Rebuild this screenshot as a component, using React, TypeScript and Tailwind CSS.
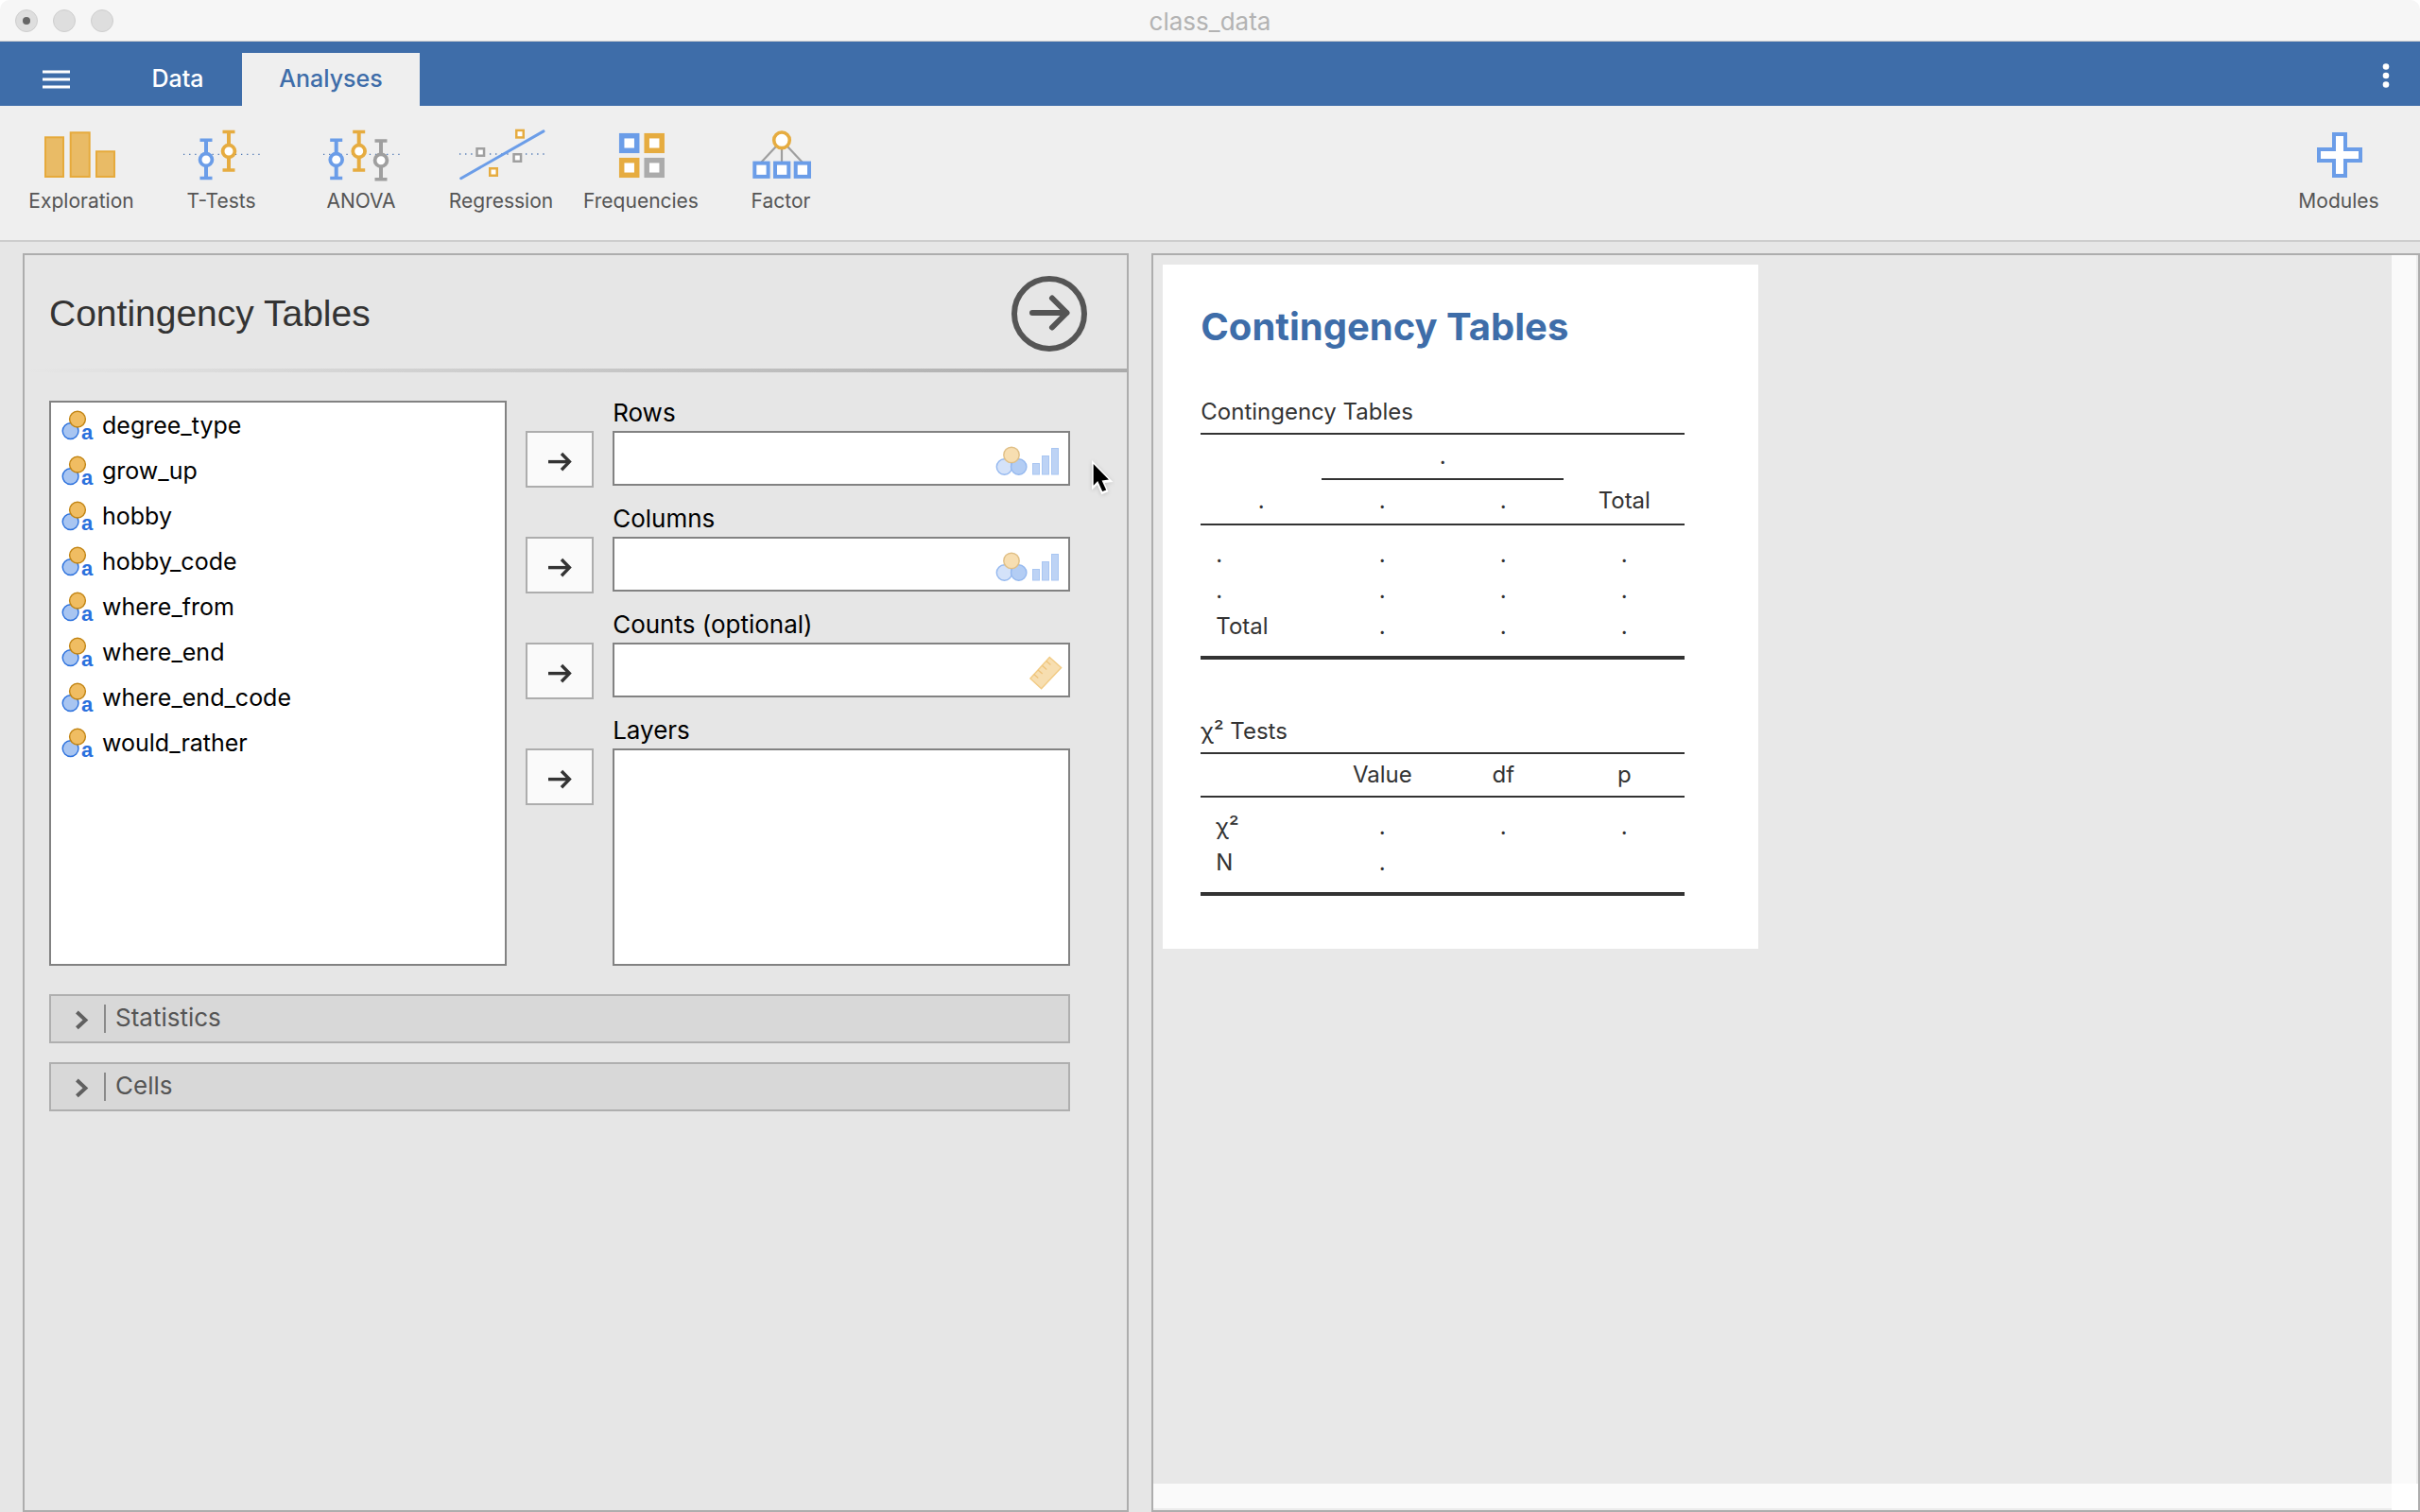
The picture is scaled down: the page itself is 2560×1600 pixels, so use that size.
import React, { useState } from "react";
import type { ReactNode } from "react";

const BLUE = "#6b9de8";
const GOLD = "#e6ac40";
const GREY = "#9f9f9f";

/* ---------- toolbar icons ---------- */

function IconFrame({ children }: { children: ReactNode }) {
  return (
    <svg className="h-16 w-24" viewBox="0 0 96 64" fill="none" aria-hidden="true">
      {children}
    </svg>
  );
}

function Dots({ x1, x2, y }: { x1: number; x2: number; y: number }) {
  return <path d={`M${x1} ${y}H${x2}`} stroke="#4f78b4" strokeWidth="1.3" strokeDasharray="1.3 4.8" />;
}

function ErrorBar({ x, top, mid, bottom, color }: { x: number; top: number; mid: number; bottom: number; color: string }) {
  return (
    <g stroke={color}>
      <path d={`M${x} ${top}V${bottom}`} strokeWidth="4" />
      <path d={`M${x - 6.5} ${top}h13M${x - 6.5} ${bottom}h13`} strokeWidth="3.4" />
      <circle cx={x} cy={mid} r="6.4" fill="#fff" strokeWidth="3.8" />
    </g>
  );
}

function Point({ x, y, color }: { x: number; y: number; color: string }) {
  return <rect x={x - 3.75} y={y - 3.75} width="7.5" height="7.5" fill="#fff" stroke={color} strokeWidth="2.5" />;
}

function ExplorationIcon() {
  return (
    <IconFrame>
      <g fill="#e9bb66" stroke="#e6aa3c" strokeWidth="2">
        <rect x="10" y="15.3" width="19" height="41.7" />
        <rect x="36.7" y="10.3" width="20" height="46.7" />
        <rect x="64" y="30.3" width="19" height="26.7" />
      </g>
    </IconFrame>
  );
}

function TTestsIcon() {
  return (
    <IconFrame>
      <Dots x1={8} x2={93} y={33.4} />
      <ErrorBar x={32} top={18.3} mid={39} bottom={58.5} color={BLUE} />
      <ErrorBar x={56} top={9.5} mid={30} bottom={50} color={GOLD} />
    </IconFrame>
  );
}

function AnovaIcon() {
  return (
    <IconFrame>
      <Dots x1={8} x2={93} y={33.4} />
      <ErrorBar x={21.7} top={18.3} mid={39} bottom={58.5} color={BLUE} />
      <ErrorBar x={45.7} top={9.5} mid={30} bottom={50} color={GOLD} />
      <ErrorBar x={69} top={19} mid={39.7} bottom={59.7} color={GREY} />
    </IconFrame>
  );
}

function RegressionIcon() {
  return (
    <IconFrame>
      <g>
        <Dots x1={4} x2={20} y={33} />
        <Dots x1={36} x2={56} y={33} />
        <Dots x1={74} x2={95} y={33} />
      </g>
      <path d="M5.7 58.7L93 8.9" stroke={BLUE} strokeWidth="3" strokeLinecap="round" />
      <Point x={68} y={11.7} color={GOLD} />
      <Point x={26.3} y={31} color={GREY} />
      <Point x={65.3} y={37} color={GREY} />
      <Point x={40} y={52} color={GOLD} />
    </IconFrame>
  );
}

function FrequenciesIcon() {
  return (
    <IconFrame>
      <g fill="#fff" strokeWidth="5.5">
        <rect x="27.7" y="13.7" width="16" height="15.6" stroke={BLUE} />
        <rect x="54.2" y="13.7" width="16" height="15.6" stroke={GOLD} />
        <rect x="27.7" y="39.7" width="16" height="15.6" stroke={GOLD} />
        <rect x="54.2" y="39.7" width="16" height="15.6" stroke="#ababab" />
      </g>
    </IconFrame>
  );
}

function FactorIcon() {
  return (
    <IconFrame>
      <path d="M43 25L27 42M49 26V42M55 25L71 42" stroke={GREY} strokeWidth="2.2" />
      <circle cx="49" cy="18.3" r="8.3" fill="#fff" stroke={GOLD} strokeWidth="3.6" />
      <g fill="#fff" stroke={BLUE} strokeWidth="4">
        <rect x="20.3" y="42.6" width="14.3" height="14.3" />
        <rect x="42" y="42.6" width="14.3" height="14.3" />
        <rect x="63.7" y="42.6" width="14.3" height="14.3" />
      </g>
    </IconFrame>
  );
}

function ModulesIcon() {
  return (
    <IconFrame>
      <path d="M43 12h12v16h16v12H55v16H43V40H27V28h16z" fill="#fff" stroke={BLUE} strokeWidth="4" />
    </IconFrame>
  );
}

/* ---------- option panel icons ---------- */

function NominalTextIcon() {
  return (
    <svg className="h-10 w-9" viewBox="0 -2 36 40" aria-hidden="true">
      <circle cx="10.6" cy="24.1" r="8.4" fill="#a8c5f1" stroke="#2a70dd" strokeWidth="1.4" />
      <circle cx="18" cy="11.6" r="8.4" fill="#f0bd62" stroke="#c28413" strokeWidth="1.4" />
      <text x="22" y="32.6" fontFamily='"Liberation Sans", sans-serif' fontWeight="700" fontSize="22" fill="#2a70dd">
        a
      </text>
    </svg>
  );
}

function CategoricalHint() {
  return (
    <svg className="mr-1.5 h-[54px] w-[72px] shrink-0" viewBox="0 0 72 54" aria-hidden="true">
      <g strokeWidth="1.4">
        <circle cx="10.5" cy="36" r="8.2" fill="#d4e2f9" stroke="#94b8ef" />
        <circle cx="25.7" cy="36" r="8.2" fill="#b3cdf4" stroke="#94b8ef" />
        <circle cx="18" cy="23.4" r="8.2" fill="#f7deb1" stroke="#e0bf86" />
      </g>
      <g fill="#bdd3f5" stroke="#a9c6f2">
        <rect x="40.5" y="32.5" width="7" height="11.5" />
        <rect x="50.5" y="24.5" width="7" height="19.5" />
        <rect x="60.5" y="16.5" width="7" height="27.5" />
      </g>
    </svg>
  );
}

function ContinuousHint() {
  return (
    <svg className="mr-1.5 h-[54px] w-[72px] shrink-0" viewBox="0 0 72 54" fill="none" aria-hidden="true">
      <path d="M58.3 13.6L70.6 24.6L49.6 46.8L37.9 36Z" fill="#f7deb0" stroke="#f2cb84" strokeWidth="1.4" />
      <path
        d="M41.7 31.6l4.6 4M46 26.9l4.8 4.2M50.4 22.2l4.8 4.2M54.8 17.5l4.6 4.1"
        stroke="#eec27a"
        strokeWidth="1.3"
      />
    </svg>
  );
}

function TransferButton({ label }: { label: string }) {
  return (
    <button
      type="button"
      aria-label={`Move to ${label}`}
      className="flex h-[60px] w-[72px] items-center justify-center border-2 border-[#adadad] bg-[#fafafa]"
    >
      <svg className="size-7" viewBox="0 0 28 28" fill="none" stroke="#333" aria-hidden="true">
        <path d="M2 16.6H24" strokeWidth="3.4" />
        <path d="M16 8L24.4 16.6L16 25.2" strokeWidth="3.4" />
      </svg>
    </button>
  );
}

function PointerCursor() {
  return (
    <svg
      className="pointer-events-none absolute top-[217px] right-[9px] h-10 w-7 drop-shadow-sm"
      viewBox="0 0 28 40"
      aria-hidden="true"
    >
      <path d="M0 0V31.6L5.8 26L10.4 36.2L17.4 33.2L13.6 24L22.4 23Z" fill="#fff" />
      <path d="M1.7 4V26.8L6.2 22L11.2 33L15.2 31.4L10.6 21.6L17.9 20.4Z" fill="#000" />
    </svg>
  );
}

/* ---------- data ---------- */

const TOOLS = [
  { label: "Exploration", Icon: ExplorationIcon },
  { label: "T-Tests", Icon: TTestsIcon },
  { label: "ANOVA", Icon: AnovaIcon },
  { label: "Regression", Icon: RegressionIcon },
  { label: "Frequencies", Icon: FrequenciesIcon },
  { label: "Factor", Icon: FactorIcon },
];

const VARIABLES = [
  "degree_type",
  "grow_up",
  "hobby",
  "hobby_code",
  "where_from",
  "where_end",
  "where_end_code",
  "would_rather",
];

const TARGETS = [
  { id: "rows", label: "Rows", hint: <CategoricalHint /> },
  { id: "columns", label: "Columns", hint: <CategoricalHint /> },
  { id: "counts", label: "Counts (optional)", hint: <ContinuousHint /> },
  { id: "layers", label: "Layers", hint: null },
];

/* ---------- page parts ---------- */

function TitleBar() {
  return (
    <div className="grid h-11 shrink-0 grid-cols-3 items-center rounded-t-[10px] border-b border-[#d2d2d2] bg-[#f6f6f6] px-4">
      <div className="flex gap-4">
        <button
          type="button"
          aria-label="Close"
          className="flex size-6 items-center justify-center rounded-full border border-[#cecece] bg-[#dedede]"
        >
          <span className="size-2 rounded-full bg-[#666]" />
        </button>
        <button type="button" aria-label="Minimise" className="size-6 rounded-full border border-[#cecece] bg-[#dedede]" />
        <button type="button" aria-label="Zoom" className="size-6 rounded-full border border-[#cecece] bg-[#dedede]" />
      </div>
      <h1 className="pt-0.5 text-center text-[26px] leading-8 text-[#b3b3b3]">class_data</h1>
    </div>
  );
}

function TabBar() {
  return (
    <nav className="flex h-[68px] shrink-0 items-end bg-[#3e6da9] text-[25px]">
      <button type="button" aria-label="Menu" className="flex h-14 w-[120px] items-center justify-center">
        <svg className="h-5 w-[30px]" viewBox="0 0 30 20" stroke="#fff" strokeWidth="3.2" aria-hidden="true">
          <path d="M0 2H29M0 10H29M0 18H29" />
        </svg>
      </button>
      <button type="button" className="h-14 w-[136px] font-medium text-white">
        Data
      </button>
      <button type="button" className="h-14 w-[188px] bg-[#efefef] font-medium text-[#3e6da9]">
        Analyses
      </button>
      <button type="button" aria-label="More" className="ml-auto flex h-[68px] w-[72px] justify-center">
        <svg className="h-[68px] w-5" viewBox="0 0 20 68" fill="#fff" aria-hidden="true">
          <circle cx="10" cy="26.5" r="3.3" />
          <circle cx="10" cy="36" r="3.3" />
          <circle cx="10" cy="45.5" r="3.3" />
        </svg>
      </button>
    </nav>
  );
}

function ToolButton({ label, Icon }: { label: string; Icon: () => ReactNode }) {
  return (
    <button type="button" className="flex w-[148px] flex-col items-center pt-[18px] text-[21px] leading-6 text-[#555]">
      <Icon />
      <span className="mt-[7px]">{label}</span>
    </button>
  );
}

function Toolbar() {
  return (
    <div className="flex h-36 shrink-0 items-start border-b-2 border-[#cdcdcd] bg-[#efefef] px-3">
      {TOOLS.map((t) => (
        <ToolButton key={t.label} label={t.label} Icon={t.Icon} />
      ))}
      <div className="ml-auto">
        <ToolButton label="Modules" Icon={ModulesIcon} />
      </div>
    </div>
  );
}

function Collapse({ title }: { title: string }) {
  const [open, setOpen] = useState(false);
  return (
    <button
      type="button"
      aria-expanded={open}
      onClick={() => setOpen(!open)}
      className="flex h-[52px] w-full items-center border-2 border-[#afafaf] bg-[#d8d8d8] pl-6 text-[26px] leading-8 text-[#555]"
    >
      <svg className="h-6 w-5" viewBox="0 0 20 24" fill="none" stroke="#606060" strokeWidth="4" aria-hidden="true">
        <path d="M3.4 5L12.4 13.4L3.4 21.8" />
      </svg>
      <span className="ml-3 h-[30px] w-0.5 bg-[#8a8a8a]" />
      <span className="ml-2.5 pb-0.5">{title}</span>
    </button>
  );
}

function OptionsPanel() {
  return (
    <section className="relative min-w-0 flex-[1170_1_0%] border-2 border-[#adadad]">
      <header className="flex h-[120px] items-center justify-between pt-1 pr-[42px] pl-[26px]">
        <h2 className="font-['Liberation_Sans',sans-serif] text-[39px] leading-[48px] text-[#333]">Contingency Tables</h2>
        <button type="button" aria-label="Hide options" className="size-20">
          <svg className="size-20" viewBox="0 0 80 80" fill="none" stroke="#555" strokeWidth="6" aria-hidden="true">
            <circle cx="40" cy="40" r="37" />
            <path d="M22 39H58" strokeLinecap="round" />
            <path d="M43 23.5L58.5 39L43 54.5" strokeLinecap="round" strokeLinejoin="round" />
          </svg>
        </button>
      </header>
      <div className="h-1 bg-linear-to-r from-[#e6e6e6] to-[#ababab]" />

      <div className="pt-[30px] pr-[60px] pl-[26px]">
        <div className="grid grid-cols-[minmax(0,1fr)_72px_minmax(0,1fr)] gap-5">
          <ul className="border-2 border-[#828282] bg-white text-[25px] leading-8 text-black">
            {VARIABLES.map((name) => (
              <li key={name} className="flex h-12 items-center gap-2 pl-2.5">
                <NominalTextIcon />
                {name}
              </li>
            ))}
          </ul>
          <div className="flex flex-col gap-[52px] pt-8">
            {TARGETS.map((t) => (
              <TransferButton key={t.id} label={t.label} />
            ))}
          </div>
          <div className="flex flex-col gap-[22px]">
            {TARGETS.map((t) => (
              <div key={t.id}>
                <label htmlFor={t.id} className="mb-1.5 block text-[26px] leading-[26px] text-black">
                  {t.label}
                </label>
                {t.hint ? (
                  <div className="flex h-[58px] border-2 border-[#828282] bg-white">
                    <input id={t.id} readOnly className="min-w-0 flex-1 px-2 text-[25px] outline-none" />
                    {t.hint}
                  </div>
                ) : (
                  <textarea
                    id={t.id}
                    readOnly
                    className="block h-[230px] w-full resize-none border-2 border-[#828282] bg-white px-2 text-[25px] outline-none"
                  />
                )}
              </div>
            ))}
          </div>
        </div>
        <div className="mt-[30px] flex flex-col gap-5">
          <Collapse title="Statistics" />
          <Collapse title="Cells" />
        </div>
      </div>
      <PointerCursor />
    </section>
  );
}

const tableClass = "w-[512px] table-fixed border-separate border-spacing-0 text-center text-[24px] leading-[38px]";
const captionClass = "h-[46px] pt-0.5 text-left leading-[44px]";

function Body({ rows }: { rows: string[][] }) {
  return (
    <tbody>
      {rows.map((cells, r) => {
        const pad = r === 0 ? "pt-3" : r === rows.length - 1 ? "border-b-4 border-[#333] pb-3" : "";
        return (
          <tr key={r}>
            {cells.map((cell, c) =>
              c === 0 ? (
                <th key={c} scope="row" className={`pl-4 text-left font-normal ${pad}`}>
                  {cell}
                </th>
              ) : (
                <td key={c} className={pad}>
                  {cell}
                </td>
              )
            )}
          </tr>
        );
      })}
    </tbody>
  );
}

function ResultsPanel() {
  return (
    <section className="flex min-w-0 flex-[1342_1_0%] flex-col border-2 border-[#adadad] bg-[#e8e8e8]">
      <div className="flex min-h-0 flex-1">
        <div className="min-w-0 flex-1 p-2.5">
          <article className="w-[630px] bg-white px-10 pt-[42px] pb-14 text-[#333]">
            <h2 className="mb-[42px] text-[40px] leading-[48px] font-bold text-[#3e6da9]">Contingency Tables</h2>

            <table className={tableClass}>
              <caption className={captionClass}>Contingency Tables</caption>
              <thead>
                <tr>
                  <th className="h-12 border-t-2 border-[#333]" />
                  <th colSpan={2} className="h-[50px] border-y-2 border-[#333] font-normal">
                    .
                  </th>
                  <th className="border-t-2 border-[#333]" />
                </tr>
                <tr>
                  {[".", ".", ".", "Total"].map((h, i) => (
                    <th key={i} scope="col" className="h-12 border-b-2 border-[#333] pb-0.5 font-normal">
                      {h}
                    </th>
                  ))}
                </tr>
              </thead>
              <Body
                rows={[
                  [".", ".", ".", "."],
                  [".", ".", ".", "."],
                  ["Total", ".", ".", "."],
                ]}
              />
            </table>

            <table className={`mt-[52px] ${tableClass}`}>
              <caption className={captionClass}>χ² Tests</caption>
              <thead>
                <tr>
                  {["", "Value", "df", "p"].map((h, i) => (
                    <th key={i} scope="col" className="h-12 border-y-2 border-[#333] font-normal">
                      {h}
                    </th>
                  ))}
                </tr>
              </thead>
              <Body
                rows={[
                  ["χ²", ".", ".", "."],
                  ["N", ".", "", ""],
                ]}
              />
            </table>
          </article>
        </div>
        <div className="w-7 border-r-2 border-[#ececec] bg-[#fafafa]" />
      </div>
      <div className="flex h-7 shrink-0">
        <div className="flex-1 border-b-2 border-[#ececec] bg-[#fafafa]" />
        <div className="w-7 bg-white" />
      </div>
    </section>
  );
}

export default function App() {
  return (
    <div className="flex min-h-screen flex-col bg-white font-[Inter,sans-serif]">
      <TitleBar />
      <TabBar />
      <Toolbar />
      <main className="flex flex-1 gap-6 bg-[#e6e6e6] pt-3 pl-6">
        <OptionsPanel />
        <ResultsPanel />
      </main>
    </div>
  );
}
